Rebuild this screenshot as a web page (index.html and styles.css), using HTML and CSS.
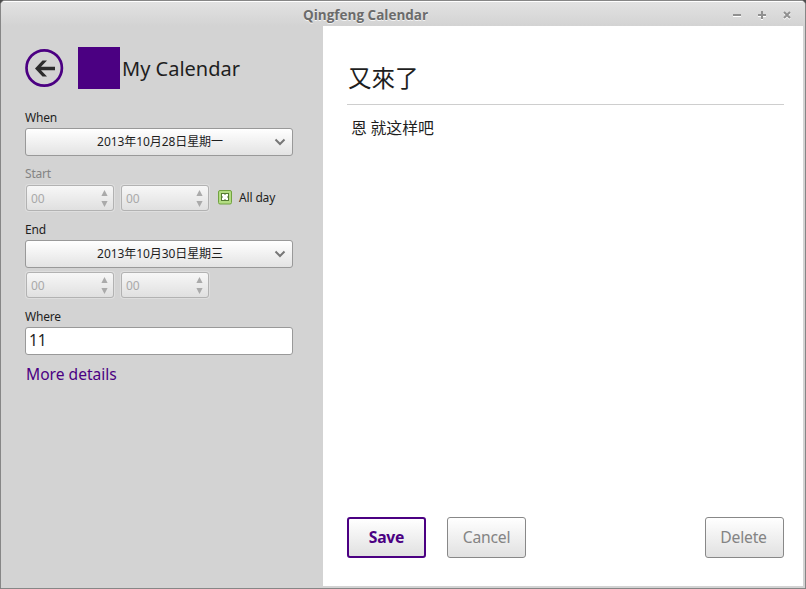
FILE: index.html
```html
<!DOCTYPE html>
<html lang="zh">
<head>
<meta charset="utf-8">
<title>Qingfeng Calendar</title>
<link rel="stylesheet" href="styles.css">
</head>
<body>
<div class="window">
  <header class="titlebar">
    <span class="window-title">Qingfeng Calendar</span>
    <div class="window-controls">
      <svg width="8" height="9" viewBox="0 0 8 9"><path class="glow" d="M0 5h8v1H0z"/><path d="M0 3h8v2H0z"/></svg>
      <svg width="8" height="9" viewBox="0 0 8 9"><path class="glow" d="M0 5h8v1H0zM3 8h2v1H3z"/><path d="M0 3h8v2H0zM3 0h2v8H3z"/></svg>
      <svg width="8" height="9" viewBox="0 0 8 9"><path class="cross glow-line" d="M1 2l6 6M7 2L1 8"/><path class="cross" d="M1 1l6 6M7 1L1 7"/></svg>
    </div>
  </header>
  <div class="content">
    <aside class="sidebar">
      <div class="heading">
        <svg class="back" width="40" height="40" viewBox="0 0 40 40"><circle cx="20.200" cy="20" r="17.700" fill="none" stroke="#4b0082" stroke-width="2.700"/><path d="M11 20.500l7.500-8H23l-6 6.300h14v3.400H17l6 6.300h-4.500z" fill="#2c2c2c"/></svg>
        <span class="swatch"></span>
        <span class="calendar-name">My Calendar</span>
      </div>
      <div class="label">When</div>
      <div class="combo"><span class="date">2013年10月28日星期一</span><svg class="chevron" width="12" height="8" viewBox="0 0 12 8"><path d="M1.5 1.5L6 6l4.5-4.5"/></svg></div>
      <div class="label start">Start</div>
      <div class="times">
        <div class="spin"><span>00</span><svg width="7" height="18" viewBox="0 0 7 18"><path d="M3.500 1L6.600 7H.4zM3.500 18L.4 12h6.200z"/></svg></div>
        <div class="spin"><span>00</span><svg width="7" height="18" viewBox="0 0 7 18"><path d="M3.500 1L6.600 7H.4zM3.500 18L.4 12h6.200z"/></svg></div>
        <div class="all-day">
          <svg width="14" height="15" viewBox="0 0 14 15"><rect x=".5" y=".5" width="13" height="13.500" rx="1.500" fill="#b3dc82" stroke="#71a340"/><path d="M3 3h8v8H3z" fill="#557c32"/><path d="M4 4h2l1 1 1-1h2v2L9 7l1 1v2H8L7 9l-1 1H4V8l1-1-1-1z" fill="#fff"/></svg>
          <span>All day</span>
        </div>
      </div>
      <div class="label end">End</div>
      <div class="combo"><span class="date">2013年10月30日星期三</span><svg class="chevron" width="12" height="8" viewBox="0 0 12 8"><path d="M1.5 1.5L6 6l4.5-4.5"/></svg></div>
      <div class="times end-times">
        <div class="spin"><span>00</span><svg width="7" height="18" viewBox="0 0 7 18"><path d="M3.500 1L6.600 7H.4zM3.500 18L.4 12h6.200z"/></svg></div>
        <div class="spin"><span>00</span><svg width="7" height="18" viewBox="0 0 7 18"><path d="M3.500 1L6.600 7H.4zM3.500 18L.4 12h6.200z"/></svg></div>
      </div>
      <div class="label where">Where</div>
      <div class="entry">11</div>
      <a class="more">More details</a>
    </aside>
    <main class="detail">
      <h1 class="event-title">又來了</h1>
      <p class="event-note">恩 就这样吧</p>
      <div class="actions">
        <button class="action save">Save</button>
        <button class="action">Cancel</button>
        <button class="action delete">Delete</button>
      </div>
    </main>
  </div>
</div>
</body>
</html>
```
FILE: styles.css
```css
* { box-sizing: border-box; }
body {
  margin: 0;
  background: #4c4c4c;
  font-family: "Noto Sans", "Noto Sans CJK SC", sans-serif;
  color: #1e1e1e;
}
svg { display: block; flex: none; }
.window {
  width: 806px;
  height: 589px;
  border: 1px solid #868686;
  border-radius: 5px 5px 0 0;
  background: #d3d3d3;
  overflow: hidden;
  display: flex;
  flex-direction: column;
}
.titlebar {
  height: 25px;
  flex: none;
  display: grid;
  grid-template-columns: 266px auto 1fr;
  align-items: center;
  border-top: 1px solid #fff;
  background: linear-gradient(#e2e2e2, #d3d3d3);
  padding: 1px 14px 0 36px;
}
.window-title {
  grid-column: 2;
  font: bold 13.5px/24px "Open Sans", sans-serif;
  white-space: nowrap;
  color: #6b6b6b;
  text-shadow: 0 1px #f4f4f4;
}
.window-controls {
  display: flex;
  gap: 17px;
  justify-self: end;
  padding-top: 1px;
}
.window-controls path { fill: #909090; }
.window-controls .glow { fill: #fff; }
.window-controls .cross { fill: none; stroke: #909090; stroke-width: 2; }
.window-controls .glow-line { stroke: #fff; }
.content { flex: 1; display: flex; min-height: 0; padding: 0 2px 2px 0; }
.sidebar { width: 322px; flex: none; padding: 21px 30px 0 24px; }
.heading { height: 42px; display: flex; align-items: center; }
.back { margin: -1px 0 0 -1px; }
.swatch { width: 42px; height: 42px; margin-left: 14px; background: #4b0082; }
.calendar-name { margin-left: 2px; font-size: 20px; white-space: nowrap; }
.label { height: 20px; margin-top: 19px; font-size: 12px; line-height: 20px; letter-spacing: -.2px; }
.combo {
  height: 28px;
  border: 1px solid #999;
  border-radius: 3px;
  background: linear-gradient(#fff, #e3e3e3);
  display: flex;
  align-items: center;
  padding-right: 6px;
}
.date { flex: 1; padding-left: 20px; text-align: center; font-size: 12px; line-height: 24px; letter-spacing: -.08px; white-space: nowrap; }
.chevron path { fill: none; stroke: #777; stroke-width: 2; }
.start { margin-top: 8px; color: #848484; }
.times { display: flex; gap: 7px; margin-top: 1px; padding-left: 1px; }
.spin {
  width: 88px;
  height: 26px;
  border: 1px solid #b2b2b2;
  border-radius: 3px;
  box-shadow: 0 0 0 1px #dedede;
  background: linear-gradient(#f7f7f7, #e0e0e0);
  color: #a9a9a9;
  font-size: 12px;
  line-height: 22px;
  display: flex;
  align-items: center;
  justify-content: space-between;
  padding: 1px 5px 1px 4px;
}
.spin span { padding-top: 1px; }
.spin path { fill: #aaa; }
.all-day { display: flex; align-items: center; gap: 7px; height: 24px; margin-left: 2px; font-size: 12px; white-space: nowrap; letter-spacing: -.15px; }
.end { margin-top: 9px; }
.end-times { margin-top: 4px; }
.where { margin-top: 9px; }
.entry {
  height: 28px;
  border: 1px solid #999;
  border-radius: 3px;
  background: #fff;
  padding-left: 3px;
  font-size: 15.5px;
  line-height: 24px;
}
.more { display: block; margin: 8px 0 0 1px; font-size: 15.6px; line-height: 22px; color: #4b0082; }
.detail { flex: 1; min-width: 0; background: #fff; padding: 26px 19px 28px 24px; display: flex; flex-direction: column; }
.event-title {
  height: 53px;
  margin: 0;
  padding-left: 1px;
  border-bottom: 1px solid #cecece;
  font: 400 23.500px/50px "Noto Sans CJK TC", sans-serif;
}
.event-note { margin: 11px 0 0 4px; font: 15.9px/24px "Noto Sans CJK SC", sans-serif; }
.actions { display: flex; gap: 21px; margin-top: auto; }
.action {
  width: 79px;
  height: 41px;
  padding: 0 0 2px;
  border: 1px solid #888;
  border-radius: 3px;
  background: linear-gradient(#fff, #e1e1e1);
  font: 15.7px "Noto Sans", sans-serif;
  letter-spacing: -.2px;
  color: #848484;
}
.save { border: 2px solid #4b0082; color: #4b0082; font-weight: bold; }
.delete { margin-left: auto; padding-right: 2px; }
```
